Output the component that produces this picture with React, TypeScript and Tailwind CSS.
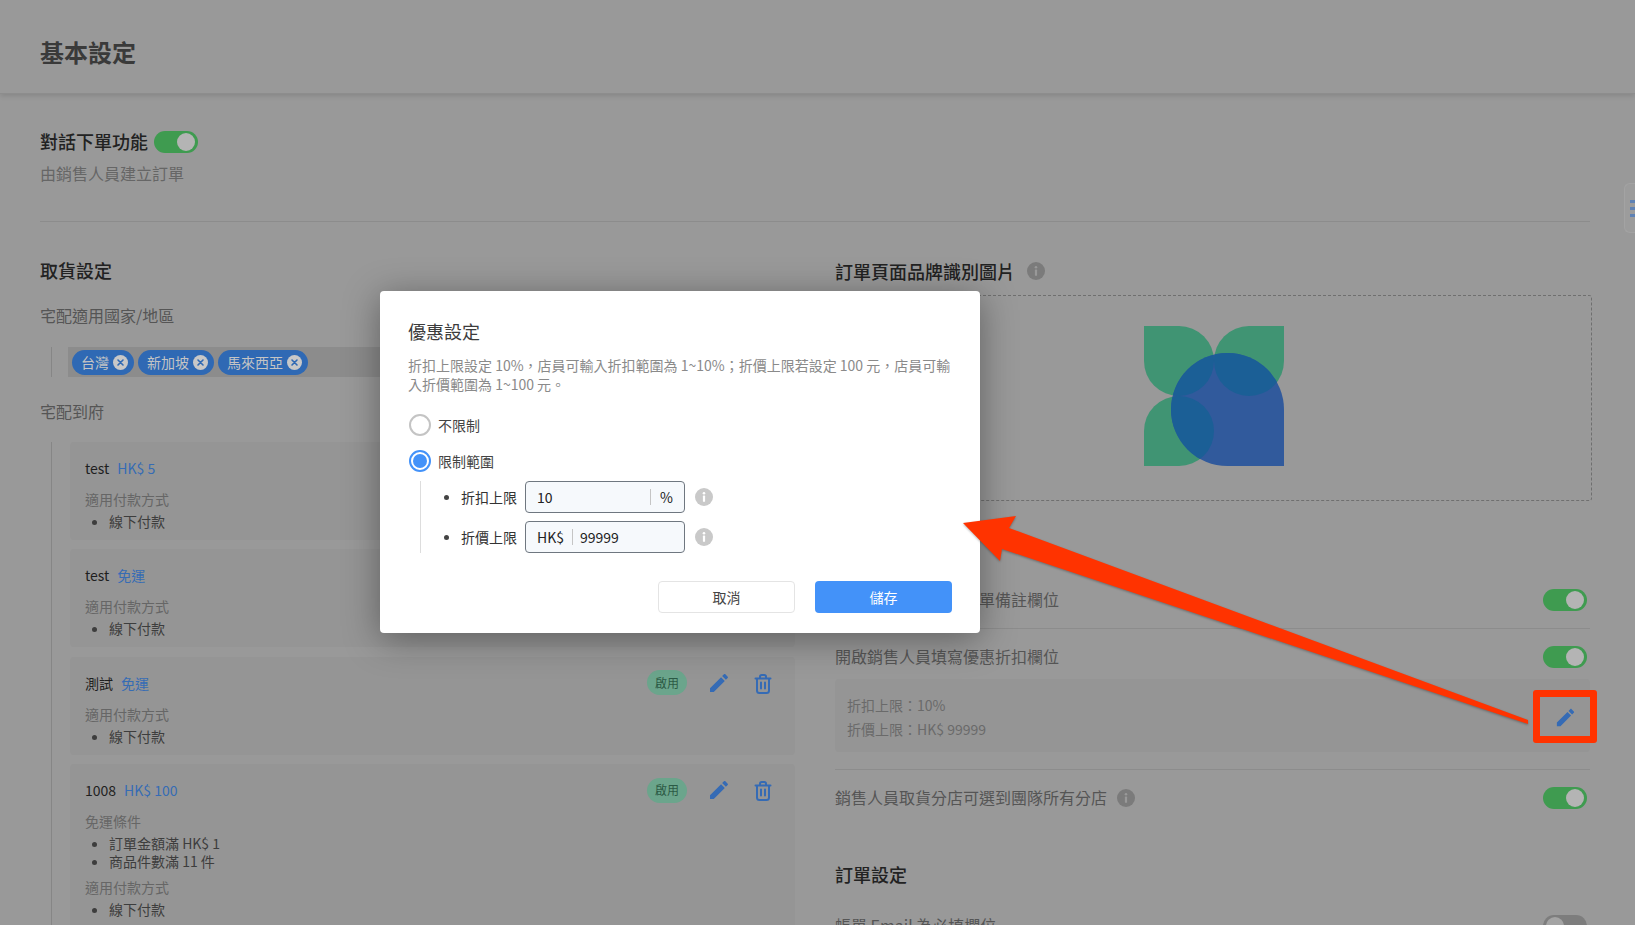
import React from "react";

function Toggle({ on = true }: { on?: boolean }) {
  return on ? (
    <div className="flex h-[22px] w-[44px] shrink-0 items-center justify-end rounded-full bg-[#3f9b50] pr-[3px]">
      <div className="h-[18px] w-[18px] rounded-full bg-[#b4b4b4]" />
    </div>
  ) : (
    <div className="flex h-[22px] w-[44px] shrink-0 items-center justify-start rounded-full bg-[#7d7d7d] pl-[3px]">
      <div className="h-[18px] w-[18px] rounded-full bg-[#a4a4a4]" />
    </div>
  );
}

function Info({ bg = "#7b7b7b", fg = "#999999" }: { bg?: string; fg?: string }) {
  return (
    <svg width="18" height="18" viewBox="0 0 18 18" className="shrink-0">
      <circle cx="9" cy="9" r="9" fill={bg} />
      <circle cx="9" cy="5.2" r="1.3" fill={fg} />
      <rect x="7.9" y="7.6" width="2.2" height="6.2" rx="0.6" fill={fg} />
    </svg>
  );
}

function Pencil({ size = 24, color = "#356bb5" }: { size?: number; color?: string }) {
  return (
    <svg width={size} height={size} viewBox="0 0 24 24" className="shrink-0" fill={color}>
      <path d="M3 17.25V21h3.75L17.81 9.94l-3.75-3.75L3 17.25zM20.71 7.04c.39-.39.39-1.02 0-1.41l-2.34-2.34c-.39-.39-1.02-.39-1.41 0l-1.83 1.83 3.75 3.75 1.83-1.83z" />
    </svg>
  );
}

function Trash() {
  return (
    <svg width="18" height="20" viewBox="0 0 18 20" className="shrink-0 translate-y-px" fill="none" stroke="#356bb5" strokeWidth="2" strokeLinecap="round">
      <path d="M1.5 4.5h15" />
      <path d="M6 4V2.8C6 1.8 6.8 1 7.8 1h2.4c1 0 1.8.8 1.8 1.8V4" />
      <path d="M3 5v11.5C3 17.9 4.1 19 5.5 19h7c1.4 0 2.5-1.1 2.5-2.5V5" />
      <path d="M7 8.5v6M11 8.5v6" />
    </svg>
  );
}

function Tag({ label }: { label: string }) {
  return (
    <div className="flex h-[25px] items-center gap-[4px] rounded-full bg-[#2f69b4] pl-[9px] pr-[6px] text-[14px] text-[#c4c4c4]">
      <span>{label}</span>
      <svg width="15" height="15" viewBox="0 0 15 15">
        <circle cx="7.5" cy="7.5" r="7.5" fill="#c8c8c8" />
        <path d="M5 5l5 5M10 5l-5 5" stroke="#2f69b4" strokeWidth="1.6" strokeLinecap="round" />
      </svg>
    </div>
  );
}

function Card({
  name,
  price,
  conditions,
}: {
  name: string;
  price: string;
  conditions?: string[];
}) {
  return (
    <div className="rounded-[4px] bg-[#959595] pb-[9px] pl-[15px] pr-[23px] pt-4 text-[14px] leading-5">
      <div className="flex h-5 items-center justify-between">
        <div className="flex items-center gap-[8px]">
          <span className="text-[#1f1f1f]">{name}</span>
          <span className="text-[#366cb4]">{price}</span>
        </div>
        <div className="flex items-center">
          <span className="flex h-[25px] w-[40px] items-center justify-center rounded-full bg-[#6ba58c] text-[12px] text-[#2b5a45]">啟用</span>
          <span className="ml-[20px]"><Pencil /></span>
          <span className="ml-[23px]"><Trash /></span>
        </div>
      </div>
      {conditions && (
        <>
          <div className="mt-[11px] text-[#666666]">免運條件</div>
          <ul className="mt-[3px] list-disc pl-[24px] leading-[18px] text-[#3d3d3d]">
            {conditions.map((c) => (
              <li key={c}>{c}</li>
            ))}
          </ul>
        </>
      )}
      <div className={`${conditions ? "mt-[7px]" : "mt-[11px]"} text-[#666666]`}>適用付款方式</div>
      <ul className="mt-[2px] list-disc pl-[24px] text-[#3d3d3d]">
        <li>線下付款</li>
      </ul>
    </div>
  );
}

function Logo() {
  const blue = "M27 83.5A56.5 56.5 0 0 1 140 83.5V140H83.5A56.5 56.5 0 0 1 27 83.5Z";
  const leafA = "M0 0H35A35 35 0 0 1 70 35A35 35 0 0 1 35 70A35 35 0 0 1 0 35Z";
  const leafB = "M140 0H105A35 35 0 0 0 70 35A35 35 0 0 0 140 35Z";
  const leafC = "M0 140V105A35 35 0 0 1 70 105A35 35 0 0 1 35 140Z";
  return (
    <svg width="140" height="140" viewBox="0 0 140 140">
      <defs>
        <clipPath id="b">
          <path d={blue} />
        </clipPath>
      </defs>
      <path d={leafA} fill="#409473" />
      <path d={leafB} fill="#409473" />
      <path d={leafC} fill="#409473" />
      <path d={blue} fill="#315a9c" />
      <g clipPath="url(#b)" fill="#1b5f96">
        <path d={leafA} />
        <path d={leafB} />
        <path d={leafC} />
      </g>
    </svg>
  );
}

function Radio({ checked, label }: { checked?: boolean; label: string }) {
  return (
    <div className="flex h-[22px] items-center gap-[7px] text-[14px] text-[#444444]">
      {checked ? (
        <div className="flex h-[22px] w-[22px] items-center justify-center rounded-full border-2 border-[#4392f9]">
          <div className="h-[14px] w-[14px] rounded-full bg-[#4392f9]" />
        </div>
      ) : (
        <div className="h-[22px] w-[22px] rounded-full border-2 border-[#c4c4c4]" />
      )}
      <span>{label}</span>
    </div>
  );
}

function Limit({ label, children }: { label: string; children: React.ReactNode }) {
  return (
    <div className="flex h-8 items-center">
      <div className="h-[5px] w-[5px] rounded-full bg-[#444444]" />
      <span className="ml-[12px] w-[64px] text-[14px] text-[#333333]">{label}</span>
      <div className="flex h-8 w-[160px] items-center rounded-[4px] border border-[#6f7780] bg-[#f6f9fc] text-[14px] text-[#222222]">
        {children}
      </div>
      <span className="ml-[10px]"><Info bg="#c9c9c9" fg="#ffffff" /></span>
    </div>
  );
}

export default function App() {
  return (
    <div className="relative h-[925px] w-full overflow-hidden bg-[#999999] font-['Noto_Sans_CJK_TC','Noto_Sans',sans-serif]">
      <header className="flex h-[94px] items-center border-b border-[#8d8d8d] px-10 pt-[10px] shadow-[0_2px_5px_rgba(0,0,0,0.12)]">
        <h1 className="text-[24px] font-bold text-[#3a3a3a]">基本設定</h1>
      </header>

      <main className="pl-10 pr-[45px]">
        <div className="mt-[36px] flex h-6 items-center gap-[6px]">
          <span className="mb-[2px] text-[18px] font-medium text-[#222222]">對話下單功能</span>
          <Toggle />
        </div>
        <p className="mt-[9px] text-[16px] leading-5 text-[#666666]">由銷售人員建立訂單</p>
        <div className="mt-[38px] h-px bg-[#8c8c8c]" />

        <div className="mt-[35px] grid grid-cols-2 gap-10">
          <section>
            <h2 className="text-[18px] font-medium leading-[26px] text-[#222222]">取貨設定</h2>
            <div className="mt-[22px] text-[16px] leading-5 text-[#555555]">宅配適用國家/地區</div>
            <div className="ml-[11px] mt-[22px] border-l border-[#868686] pl-[16px]">
              <div className="flex h-[30px] items-center gap-1 bg-[#8c8c8c] pl-1">
                <Tag label="台灣" />
                <Tag label="新加坡" />
                <Tag label="馬來西亞" />
              </div>
            </div>
            <div className="mt-[24px] text-[16px] leading-5 text-[#555555]">宅配到府</div>
            <div className="ml-[11px] mt-[21px] flex flex-col gap-[9.4px] border-l border-[#868686] pl-[18px]">
              <Card name="test" price="HK$ 5" />
              <Card name="test" price="免運" />
              <Card name="測試" price="免運" />
              <Card name="1008" price="HK$ 100" conditions={["訂單金額滿 HK$ 1", "商品件數滿 11 件"]} />
            </div>
          </section>

          <section className="pt-px">
            <div className="flex h-[26px] items-center gap-[12px]">
              <h2 className="text-[18px] font-medium text-[#222222]">訂單頁面品牌識別圖片</h2>
              <Info />
            </div>
            <div className="-mr-[2px] mt-[11px] flex h-[206px] items-center justify-center rounded-[3px] border border-dashed border-[#6f6f6f] pb-1">
              <Logo />
            </div>

            <div className="mt-[88px] flex h-[22px] items-center justify-between pr-[3px] text-[16px] text-[#555555]">
              <span className="mb-[2px]">開啟銷售人員填寫訂單備註欄位</span>
              <Toggle />
            </div>
            <div className="mt-[17px] h-px bg-[#8c8c8c]" />
            <div className="mt-[17px] flex h-[22px] items-center justify-between pr-[3px] text-[16px] text-[#555555]">
              <span className="mb-[2px]">開啟銷售人員填寫優惠折扣欄位</span>
              <Toggle />
            </div>
            <div className="mt-[11px] flex h-[73px] items-center justify-between rounded-[4px] bg-[#959595] pl-[12px] pr-[13px] pt-[3px] text-[14px] leading-6 text-[#6a6a6a]">
              <div>
                <div>折扣上限：10%</div>
                <div>折價上限：HK$ 99999</div>
              </div>
              <Pencil size={23} />
            </div>
            <div className="mt-[17px] h-px bg-[#8c8c8c]" />
            <div className="mt-[17px] flex h-[22px] items-center justify-between pr-[3px] text-[16px] text-[#555555]">
              <span className="flex items-center gap-[10px]">
                <span className="mb-[2px]">銷售人員取貨分店可選到團隊所有分店</span>
                <Info />
              </span>
              <Toggle />
            </div>

            <h2 className="mt-[52px] text-[18px] font-medium leading-[26px] text-[#222222]">訂單設定</h2>
            <div className="mt-[28px] flex h-[22px] items-center justify-between pr-[3px] text-[16px] text-[#555555]">
              <span className="mb-[2px]">帳單 Email 為必填欄位</span>
              <Toggle on={false} />
            </div>
          </section>
        </div>
      </main>

      <div className="absolute right-0 top-[183px] flex h-[50px] w-[11px] flex-col justify-center gap-1 rounded-l-[6px] border border-r-0 border-[#a3a3a3] bg-[#9c9c9c] pl-[5px]">
        <div className="h-[3px] bg-[#5f82b5]" />
        <div className="h-[3px] bg-[#5f82b5]" />
        <div className="h-[3px] bg-[#5f82b5]" />
      </div>

      <div className="absolute left-[380px] top-[291px] h-[342px] w-[600px] rounded-[4px] bg-white px-[28px] pt-[27px] shadow-[0_6px_36px_rgba(0,0,0,0.38)]">
        <h3 className="text-[18px] font-normal leading-[26px] text-[#3c3c3c]">優惠設定</h3>
        <p className="mt-[12px] text-[14px] leading-[19px] text-[#8a8a8a]">
          折扣上限設定 10%，店員可輸入折扣範圍為 1~10%；折價上限若設定 100 元，店員可輸入折價範圍為 1~100 元。
        </p>
        <div className="mt-[20px] flex flex-col gap-[14px] pl-px">
          <Radio label="不限制" />
          <Radio checked label="限制範圍" />
        </div>
        <div className="ml-[12px] mt-[9px] flex flex-col gap-2 border-l border-[#dddddd] pl-[23px]">
          <Limit label="折扣上限">
            <span className="ml-[11px] flex-1">10</span>
            <span className="h-4 w-px bg-[#c5c5c5]" />
            <span className="ml-[9px] mr-[11px]">%</span>
          </Limit>
          <Limit label="折價上限">
            <span className="ml-[11px]">HK$</span>
            <span className="ml-[8px] h-4 w-px bg-[#c5c5c5]" />
            <span className="ml-[7px]">99999</span>
          </Limit>
        </div>
        <div className="mt-[28px] flex justify-end gap-5 text-[14px]">
          <button className="h-8 w-[137px] rounded-[4px] border border-[#e4e4e4] bg-white text-[#444444]">取消</button>
          <button className="h-8 w-[137px] rounded-[4px] bg-[#4392f9] text-white">儲存</button>
        </div>
      </div>

      <div className="absolute left-[1533px] top-[690px] h-[53px] w-[64px] rounded-[3px] border-[7px] border-[#ff3300]" />

      <svg className="pointer-events-none absolute left-0 top-0 drop-shadow-[0_1px_1px_rgba(0,0,0,0.3)]" width="1635" height="925" viewBox="0 0 1635 925">
        <polygon points="963,523 1016,516 1009,528 1528,720 1528,724 1002,549 1000,561" fill="#ff3300" />
      </svg>
    </div>
  );
}
